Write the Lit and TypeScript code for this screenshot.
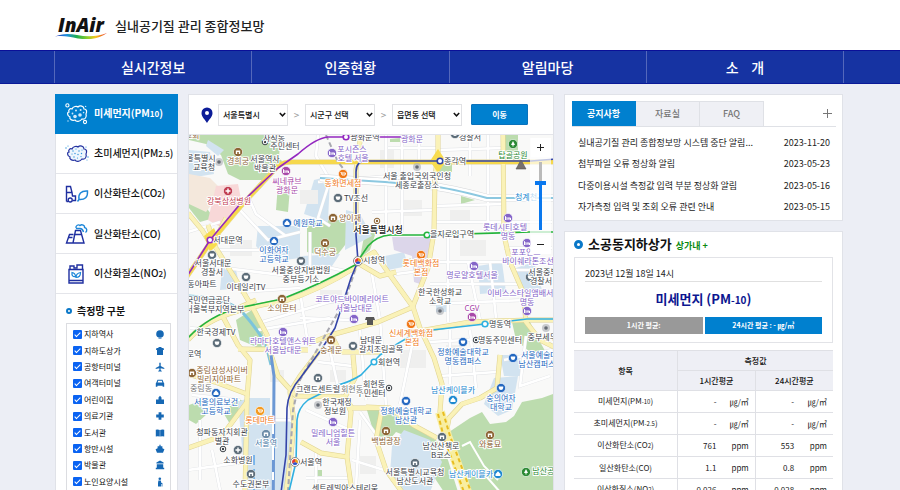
import { LitElement, html, svg, css } from "lit";
import { customElement, state } from "lit/decorators.js";

const FONT = css`"Noto Sans CJK KR", "Noto Sans", sans-serif`;

/* ---------- header ---------- */

@customElement("site-header")
class SiteHeader extends LitElement {
  static styles = css`
    :host { display: block; font-family: ${FONT}; }
    .brand { height: 50px; padding: 2px 0 0 55px; background: #fff; display: flex; align-items: center; box-sizing: border-box; }
    .home { display: flex; align-items: center; gap: 8px; color: #222; text-decoration: none; }
    .mark { display: grid; width: 52px; }
    .word { font: italic 800 19px/22px "Open Sans", sans-serif; padding-left: 3px; color: #111; }
    .swoosh { width: 52px; height: 6px; display: block; margin-top: -3px; }
    .name { font-size: 13px; line-height: 20px; font-weight: 500; }
    .nav { background: #1633a2; border-top: 1px solid #0a0f98; border-bottom: 1px solid #0a1a98; padding: 0 56px 0 54px; }
    .menu { list-style: none; margin: 0; padding: 0; display: grid; grid-template-columns: repeat(4, 1fr); border-right: 1px solid #5468bb; }
    .entry { border-left: 1px solid #5468bb; }
    .link { display: block; text-align: center; font-size: 14px; line-height: 32px; font-weight: 500; color: #fff; text-decoration: none; white-space: pre; }
  `;
  render() {
    const items = ["실시간정보", "인증현황", "알림마당", "소\u00a0\u00a0\u00a0\u00a0개"];
    return html`
      <header class="brand">
        <a class="home" href="#">
          <span class="mark">
            <span class="word">InAir</span>
            <svg class="swoosh" viewBox="0 0 52 6" aria-hidden="true">
              <defs><linearGradient id="r" x1="0" x2="1">
                <stop offset="0" stop-color="#2a2fb0" /><stop offset=".22" stop-color="#1d8fe0" />
                <stop offset=".42" stop-color="#1fae4e" /><stop offset=".62" stop-color="#8ccf2b" />
                <stop offset=".78" stop-color="#f5c51c" /><stop offset="1" stop-color="#e8342a" />
              </linearGradient></defs>
              <path d="M0 3.6C7 .2 14 .4 22 2 32 4 42 3.8 52 0 44 5.8 34 7.4 23 5.4 14 3.6 7 2.4 0 3.6Z" fill="url(#r)" />
            </svg>
          </span>
          <span class="name">실내공기질 관리 종합정보망</span>
        </a>
      </header>
      <nav class="nav">
        <ul class="menu">${items.map((t) => html`<li class="entry"><a class="link" href="#">${t}</a></li>`)}</ul>
      </nav>`;
  }
}

/* ---------- left column ---------- */

const blob = "M7 6C8 3 12 3 13 4 15 2 19 3 19 6 22 6 22 9 21 11 22 14 20 17 17 16 15 19 11 19 10 17 7 18 4 16 5 14 2 13 2 9 4 9 3 7 5 5 7 6Z";
const substanceIcons = [
  svg`<path d=${blob} fill="none" stroke="#fff" stroke-width="1.2"/>
    <g fill="none" stroke="#fff" stroke-width="1.1"><circle cx="2.4" cy="2.4" r="1.6"/><circle cx="20" cy="19" r="1.6"/></g>
    <g fill="#cfe8fb"><circle cx="10" cy="13.5" r="1.8"/><circle cx="15" cy="12" r="1.8"/><circle cx="11" cy="7.5" r="1"/><circle cx="15.6" cy="7" r="1"/><circle cx="7.5" cy="10.5" r=".9"/><circle cx="18.6" cy="9.6" r=".8"/><circle cx="20.6" cy="3.4" r=".7"/><circle cx="3" cy="18" r=".7"/></g>`,
  svg`<path d=${blob} fill="#eef6fd" stroke="#2432a0" stroke-width="1.2"/>
    <g fill="#2a93dc"><circle cx="8" cy="8" r=".7"/><circle cx="11" cy="6" r=".6"/><circle cx="14" cy="8" r=".7"/><circle cx="17" cy="7" r=".6"/><circle cx="7" cy="11" r=".6"/><circle cx="10" cy="10.5" r=".7"/><circle cx="13" cy="11.5" r=".7"/><circle cx="16.5" cy="10.5" r=".7"/><circle cx="9" cy="14" r=".7"/><circle cx="12.5" cy="15" r=".6"/><circle cx="16" cy="13.6" r=".6"/><circle cx="1" cy="5" r=".7"/><circle cx="3" cy="3" r=".6"/><circle cx="23" cy="14" r=".7"/><circle cx="21" cy="4" r=".6"/><circle cx="22" cy="17" r=".5"/></g>`,
  svg`<g fill="none" stroke="#1f2fa0" stroke-width="1.4"><path d="M1.500 18.500V3.500H5.500L7 9.500H1.500M7 9.500 7.500 13H10.500V17.500H7.500M1.500 18.500H3"/><circle cx="5.200" cy="17" r="2"/></g>
    <path d="M14 16.500C13 11 16 7.500 22.500 8 23 14 20 17 14 16.500ZM12.500 18.500 14 16.500" fill="none" stroke="#1c86d8" stroke-width="1.4"/>`,
  svg`<g fill="none" stroke="#1f2fa0" stroke-width="1.400"><path d="M8 20 10.500 7.500H15.500L19 20ZM8.500 11.500H4.500L1.500 20H8"/><path d="M10 11.500H16.500M3.800 14.500H7.500"/></g>
    <path d="M11 5C10.500 2.500 13.500 1 15 2.500 17 .8 20 2.500 19.600 4.500 22 5 22.500 8 20.500 9.500M11 5.500H15C17 5.500 18 7 18.500 9" fill="none" stroke="#1c86d8" stroke-width="1.400"/>`,
  svg`<g fill="none" stroke="#1f2fa0" stroke-width="1.400"><path d="M4 20V6.500H18V20ZM4 17.500H18"/><path d="M5 6V3H9V5H12V2H17.500V6"/></g>
    <g fill="none" stroke="#1c86d8" stroke-width="1.200"><path d="M7 9.500C6.500 12.500 8 14 10.500 13.500 10.500 11 9.500 10 7 9.500ZM15.500 9.500C12.500 10 11 11.500 11 14.500 14 14.500 15.500 12.500 15.500 9.500Z"/></g>`,
];

const siteIcons = [
  svg`<circle cx="5" cy="5" r="3.800"/><path d="M3.500 9H6.500V9.600H3.500Z"/>`,
  svg`<path d="M1.500 2H8.500L9 4H8V9H2V4H1ZM3.500 1H6.500V2H3.500Z"/>`,
  svg`<path d="M4.300 1Q5 0 5.700 1V4L9.300 6V7L5.700 6.200 5.600 8 6.800 9V9.500H3.200V9L4.400 8 4.300 6.200.700 7V6L4.300 4Z"/>`,
  svg`<path d="M2.500 1.800H7.500L8.600 4.600 9.200 5.200V8.800H7.600V7.800H2.400V8.800H.8V5.200L1.400 4.600ZM3.200 2.800 2.600 4.500H7.400L6.800 2.800Z" fill-rule="evenodd"/>`,
  svg`<path d="M1 4.500H3.500V2.500L5 .800 6.500 2.500V4.500H9V9H1Z"/>`,
  svg`<path d="M3.600 1.200H6.400V3.600H8.800V6.400H6.400V8.800H3.600V6.400H1.200V3.600H3.600Z"/>`,
  svg`<path d="M.8 1.800Q3 1.200 4.800 2V8.600Q3 7.800.8 8.400ZM5.200 2Q7 1.200 9.200 1.800V8.400Q7 7.800 5.200 8.600Z"/>`,
  svg`<path d="M4.400.8H5.600V2.200H7.400V4.200L9.400 5.200 8 8.800H2L.6 5.200 2.600 4.200V2.200H4.400Z"/>`,
  svg`<path d="M5 .600 8.600 2.600V3.600H1.400V2.600ZM1.800 4.200H8.200V7.800H9.200V9.200H.8V7.800H1.800Z"/>`,
  svg`<circle cx="4.800" cy="1.700" r="1.300"/><path d="M3.400 3.400H5.800L6.400 6H7.400V9.400H6.600V7H6V9.400H3V6Z"/>`,
];

@customElement("substance-panel")
class SubstancePanel extends LitElement {
  static styles = css`
    :host { display: block; font-family: ${FONT}; background: #fff; border: 1px solid #e0e2e8; box-sizing: border-box; color: #111; }
    .list { list-style: none; margin: 0; padding: 0; }
    .row { border-bottom: 1px solid #e4e5ea; }
    .pick { display: flex; align-items: center; width: 100%; height: 39px; padding: 0 0 0 9px; gap: 5px; border: 0; background: none; font: 500 10px/16px ${FONT}; color: #111; text-align: left; white-space: nowrap; }
    .row.on { border-color: #0080cf; margin: -1px -1px 0; padding: 0 1px; background: #0080cf; }
    .row.on .pick { color: #fff; font-weight: 700; }
    .ico { width: 24px; height: 22px; flex: none; }
    .sub { font-size: 8px; }
    .head { display: flex; align-items: center; gap: 5px; margin: 0; padding: 8px 0 3px 10px; font-size: 10px; line-height: 18px; font-weight: 700; }
    .ring { width: 6px; height: 6px; border: 2px solid #0a78c8; border-radius: 50%; box-sizing: border-box; }
    .box { border: 1px solid #dcdde1; margin: 0 6px 0 10px; height: 190px; padding: 2px 5px 0 6px; }
    .sites { list-style: none; margin: 0; padding: 0; height: 164px; display: grid; grid-template-rows: repeat(10, 1fr); }
    .site { display: flex; align-items: center; }
    .label { flex: 1; display: flex; align-items: center; gap: 2px; font-size: 8px; line-height: 12px; }
    .tick { appearance: none; width: 9px; height: 9px; margin: 0; border-radius: 1px; background: #0a63f2; display: grid; flex: none; }
    .tick:checked::after { content: ""; width: 2px; height: 5px; border: solid #fff; border-width: 0 1px 1px 0; transform: rotate(45deg); place-self: center; margin-bottom: 1px; }
    .mini { width: 10px; height: 10px; fill: #1668b4; }
  `;
  render() {
    const names = [
      html`미세먼지(PM<span class="sub">10</span>)`,
      html`초미세먼지(PM<span class="sub">2.5</span>)`,
      html`이산화탄소(CO<span class="sub">2</span>)`,
      html`일산화탄소(CO)`,
      html`이산화질소(NO<span class="sub">2</span>)`,
    ];
    const sites = ["지하역사", "지하도상가", "공항터미널", "여객터미널", "어린이집", "의료기관", "도서관", "항만시설", "박물관", "노인요양시설"];
    return html`
      <ul class="list">${names.map((n, i) => html`
        <li class="row ${i === 0 ? "on" : ""}"><button class="pick">
          <svg class="ico" viewBox="0 0 24 22" aria-hidden="true">${substanceIcons[i]}</svg><span>${n}</span>
        </button></li>`)}</ul>
      <h2 class="head"><span class="ring"></span>측정망 구분</h2>
      <div class="box"><ul class="sites">${sites.map((s, i) => html`
        <li class="site"><label class="label"><input class="tick" type="checkbox" checked />${s}</label>
          <svg class="mini" viewBox="0 0 10 10" aria-hidden="true">${siteIcons[i]}</svg></li>`)}</ul></div>`;
  }
}

/* ---------- map ---------- */

type Kind = "dot" | "bed" | "cart" | "cup" | "home" | "cross" | "tree" | "ring" | "gov";
const P = "#8464c8", O = "#f07818", B = "#2468c0", N = "#8c6434", G = "#3c4248", M = "#a848a8", R = "#c03c50", T = "#2c8a34", S = "#1c88d0", D = "#222";

const labels: [number, number, string, string][] = [
  [192, 138, "교회", N], [274, 141, "사직동", G], [285, 149, "주민센터", G], [238, 164, "경희궁", N],
  [201, 161, "울특별시", G], [204, 170, "교육청", G], [265, 162, "서울역사", G], [265, 171, "박물관", G],
  [365, 140, "광화문역", G], [412, 142, "광화문", P], [352, 152, "포시즌스", P], [353, 161, "호텔 서울", P],
  [343, 186, "동화면세점", O], [287, 184, "씨네큐브", M], [287, 193, "광화문", M], [229, 204, "강북삼성병원", R],
  [356, 201, "TV조선", G], [308, 226, "예원학교", B], [350, 221, "양이재", N], [470, 140, "경찰서", G],
  [513, 158, "탑골공원", T], [455, 164, "종각역", G], [417, 179, "서울 출입국외국인청", G], [417, 188, "세종로출장소", G],
  [526, 200, "청계천", S], [505, 230, "롯데시티호텔", P], [508, 239, "명동", P],
  [228, 243, "서대문역", G], [274, 253, "이화여자", B], [274, 262, "고등학교", B], [325, 255, "덕수궁", N],
  [213, 266, "서울서대문", G], [212, 275, "경찰서", G], [202, 287, "동아파트", G], [246, 290, "이데일리TV", G],
  [301, 273, "서울중앙지방법원", G], [301, 282, "중부등기소", G], [374, 263, "시청역", G], [208, 303, "국민연금공단", G],
  [215, 312, "서울북부지역본부", G], [282, 311, "소의문터", N], [352, 302, "코트야드바이메리어트", P], [354, 311, "서울남대문", P],
  [216, 335, "한국경제TV", G], [283, 344, "라마다호텔앤스위트", P], [283, 353, "서울남대문", P], [331, 353, "숭례문", N],
  [371, 343, "남대문", G], [381, 352, "갈치조림골목", G], [194, 357, "로역", G],
  [452, 237, "을지로입구역", G], [421, 266, "롯데백화점", O], [421, 275, "본점", O], [472, 278, "명로얄호텔서울", P],
  [526, 255, "포포인츠", P], [528, 264, "바이쉐라톤조선", P], [543, 275, "서울중부", G], [541, 284, "경찰서", G],
  [440, 295, "한국한성화교", G], [440, 304, "소학교", G], [472, 311, "CGV", M], [524, 296, "이비스스타일앰배서더", P], [527, 305, "명동", P],
  [500, 327, "명동역", G], [546, 340, "중부세무서", G], [411, 336, "신세계백화점", O], [412, 345, "본점", O],
  [500, 343, "명동주민센터", G], [463, 355, "정화예술대학교", B], [463, 364, "명동캠퍼스", B], [543, 358, "서울예술대학", B], [537, 367, "남산캠퍼스", B],
  [222, 373, "중림삼성사이버", N], [219, 382, "빌리지아파트", N], [216, 405, "서울의료보건", B], [216, 414, "고등학교", B],
  [260, 423, "롯데마트", O], [222, 435, "청파동자치회관", G], [222, 444, "별관", G], [266, 446, "서울역", "#4c7ca8"],
  [238, 463, "소화병원", G], [251, 487, "수도권본부", G], [318, 392, "그랜드센트럴", G],
  [389, 365, "회현역", G], [374, 387, "회현동", G], [371, 396, "주민센터", G], [337, 405, "한국재정", G], [335, 414, "정보원", G],
  [333, 436, "밀레니엄힐튼", P], [333, 445, "서울", P], [311, 465, "서울역", G], [345, 491, "센트레빌아스테리움", G],
  [453, 393, "남산케이블카", S], [501, 401, "숭의여자", B], [501, 410, "대학교", B], [406, 414, "정화예술대학교", B], [406, 423, "남산관", B],
  [386, 444, "백범광장", N], [441, 449, "남산산책로", G], [441, 458, "B코스", G], [490, 447, "와룡묘", N],
  [415, 475, "서울특별시교육청", G], [415, 484, "남산도서관", G], [471, 477, "남산케이블카", S], [547, 474, "남산공원", T],
];

const pois: [number, number, Kind, string][] = [
  [265, 142, "ring", G], [238, 152, "gov", N], [219, 162, "dot", G], [286, 171, "bed", M], [332, 153, "bed", P], [343, 174, "cart", O],
  [228, 191, "cross", R], [338, 198, "cup", "#5c6c78"], [287, 223, "home", B], [333, 218, "gov", N], [377, 221, "ring", N],
  [455, 134, "cup", "#5c6c78"], [417, 167, "dot", G], [513, 144, "tree", T], [508, 218, "bed", P],
  [274, 241, "home", B], [325, 243, "gov", N], [212, 255, "cup", "#5c6c78"], [246, 277, "cup", "#5c6c78"], [301, 261, "cup", "#5c6c78"],
  [282, 299, "gov", N], [354, 319, "bed", P], [217, 343, "cup", "#5c6c78"], [283, 332, "bed", P], [331, 340, "gov", N], [353, 346, "cup", "#5c6c78"],
  [421, 255, "cart", O], [474, 266, "bed", P], [527, 243, "bed", P], [530, 277, "cup", "#5c6c78"], [440, 311, "dot", G], [472, 317, "bed", M],
  [527, 311, "bed", P], [546, 328, "dot", G], [411, 324, "cart", O], [476, 340, "ring", G], [463, 342, "cup", B], [513, 358, "cup", B],
  [192, 373, "gov", N], [216, 393, "home", B], [260, 411, "cart", "#f49a20"], [266, 434, "gov", "#6c8ca8"], [223, 449, "ring", G],
  [238, 450, "cross", "#5c6c78"], [251, 474, "gov", "#5c6c78"], [318, 378, "gov", "#5c6c78"], [318, 405, "dot", G], [333, 422, "bed", P],
  [389, 388, "ring", G], [406, 401, "cup", B], [453, 400, "home", S], [501, 388, "cup", B], [386, 431, "gov", N], [442, 437, "gov", "#5c6c78"],
  [490, 435, "gov", N], [415, 463, "gov", "#5c6c78"], [498, 474, "home", S], [526, 472, "tree", T],
];

const glyph = (k: Kind) => {
  switch (k) {
    case "bed": return svg`<path d="M-2.500-1.800V2M-2.500 1H2.500V2M-.500 0H2.500V1M-1.500-.500H-.8" stroke="#fff" fill="none"/>`;
    case "cart": return svg`<path d="M-2.500-1.500H-1.500L-1 1H2L2.500-1H-1" stroke="#fff" fill="none"/>`;
    case "cup": return svg`<path d="M-2.200-1.500H2.200V0Q2 2 0 2T-2.200 0Z" fill="#fff"/>`;
    case "home": return svg`<path d="M0-2.800 2.500 0V2H-2.500V0Z" fill="#fff"/>`;
    case "cross": return svg`<path d="M0-2.500V2.500M-2.500 0H2.500" stroke="#fff" stroke-width="1.400"/>`;
    case "tree": return svg`<path d="M0-3 2 1H.5V2.500H-.5V1H-2Z" fill="#fff"/>`;
    default: return svg`<path d="M-2.200 2V-1.500H2.200V2H.8V0H-.8V2Z" fill="#fff"/>`;
  }
};
const marker = ([x, y, k, c]: [number, number, Kind, string]) => svg`<g transform="translate(${x} ${y})">${
  k === "dot" ? svg`<circle r="4" fill="#a8acb2" opacity=".6"/><circle r="1.800" fill="#666c74"/>`
  : k === "ring" ? svg`<circle r="2.800" fill="#fff" stroke=${c}/><circle r="1.200" fill=${c}/>`
  : svg`<circle r="4.600" fill=${c} stroke="#fff" stroke-width=".6"/>${glyph(k)}`}</g>`;

const majorRoads = [
  "M186 278 210 243 241 206 278 166Q283 162 292 162H556", "M438 130V152L435 177 434 232 428 268 413 306",
  "M503 130 504 235 510 262 523 292 526 322 540 340 556 348", "M188 340Q205 320 238 311T282 302Q320 290 356 267",
  "M208 225 216 248 241 288 255 312 267 335 272 360", "M358 262 374 252 390 275 413 307 420 328 434 358 442 384 440 412 447 436",
  "M308 344 331 335 378 322 413 307", "M222 315 238 345 250 360 247 398 245 492", "M420 331 470 322 527 320 556 320",
  "M500 355 497 388 480 398 462 404 449 418 446 434", "M366 407 390 408 413 425 437 438", "M188 374 215 382 247 394M247 402 222 436 188 448",
  "M320 350 300 376 290 392 294 422 291 455 286 492", "M271 355 278 376 296 396 345 397 355 378 353 355", "M345 397 351 412 347 457 321 453 301 442M347 457 352 492", "M345 398 352 408 380 408",
  "M361 134 356 170V230", "M188 213 202 230 210 243M216 238 226 218", "M224 314 256 300", "M238 349 308 350",
  "M382 408 376 440 386 470 402 492", "M356 262 380 276 396 272", "M332 336 340 352 380 352",
];
const minorRoads = [
  "M318 134 316 156 330 180 318 218 330 226M318 182 390 176 432 186", "M386 134V228M402 134V232M419 134V160M470 134V176M488 134V234",
  "M438 150 503 148M388 148H438M372 212 434 210M434 206 504 204M434 222H552", "M248 196 256 214 286 236M240 210 268 240 300 232",
  "M188 232 220 222M216 250 268 250M225 268 290 276M310 232V270M322 266 350 272", "M190 328 230 332M240 292 300 288M262 322 350 296M300 292 308 344",
  "M300 318 350 320M258 330 330 318M372 274 380 320M396 274 428 270M428 262 504 262M504 248H552M512 270H552",
  "M448 236V322M468 262 480 320M490 262 496 318M430 284 520 284M430 304 526 300", "M430 342 500 338M450 330V384M470 330 476 388M440 376 496 372M380 318 386 406M360 330 366 400",
  "M192 395 240 400M200 420V480M188 470 244 462M212 450 220 490M248 420 290 420", "M306 410 350 430M316 452V490M306 478H348M360 412 380 440M318 362 352 366M330 350 340 396",
  "M526 336 520 386 550 376M504 360 552 350M414 336 400 404", "M352 460 384 470M360 420 356 486",
];
const lots = ["M380 150h14v18h-14z", "M450 210h20v14h-20z", "M460 240h26v16h-26z", "M400 200h22v16h-22z", "M320 290h22v14h-22z", "M270 370h14v12h-14z", "M330 370h16v12h-16z", "M400 350h26v18h-26z", "M230 240h22v16h-22z", "M300 190h18v14h-18z", "M446 345h18v14h-18z", "M360 456h16v18h-16z"];

@customElement("air-map")
class AirMap extends LitElement {
  static styles = css`
    :host { display: block; position: relative; font-family: ${FONT}; }
    .map { display: block; width: 100%; height: auto; background: #f8f8f8; }
    .lbl { font: 400 8px ${FONT}; text-anchor: middle; paint-order: stroke; stroke: #fff; stroke-width: 2px; stroke-linejoin: round; }
    .lbl.big { font-size: 9px; font-weight: 500; }
    .zoom { position: absolute; top: 3px; right: 2px; width: 21px; display: flex; flex-direction: column; align-items: center; gap: 5px; background: rgba(255, 255, 255, .7); }
    .btn { width: 20px; height: 19px; padding: 0; border: 0; background: #fff; display: grid; place-items: center; }
    .sign { width: 9px; height: 9px; stroke: #222; }
    .range { appearance: none; writing-mode: vertical-lr; direction: rtl; width: 12px; height: 68px; margin: 0; background: none; }
    .range::-webkit-slider-runnable-track { width: 3px; height: 68px; background: linear-gradient(#bbb 30%, #0a78ee 30%); }
    .range::-webkit-slider-thumb { appearance: none; width: 11px; height: 4px; margin-left: -4px; background: #0a78ee; }
  `;
  render() {
    return html`
      <svg class="map" viewBox="189 135 364 400" role="img" aria-label="서울특별시청 주변 지도">
        <rect x="180" y="130" width="380" height="410" fill="#f9f9f8" />
        <g fill="#bcdcae">
          <path d="M189 130H281L279 158 285 164 263 180H240L228 174 221 155 206 144 189 140Z" />
          <path d="M307 220H345L352 236 335 258 307 252Z" /><path d="M366 226 376 232 370 250 360 258Z" />
          <path d="M505 134H518V160H505Z" /><path d="M442 163H452V172H438Z" /><path d="M461 196 475 200 461 204Z" />
          <path d="M236 320 252 310 262 330 268 352 240 340Z" /><path d="M189 405 203 400 207 414 196 424 189 420Z" />
          <path d="M512 322H530L540 342 548 356 530 352 516 340Z" />
          <path d="M449 432 470 418 482 412 490 424 506 422 514 416 522 402 542 398 556 393V540H472L455 462Z" />
          <path d="M366 407 390 410 412 426 437 441 448 460 458 492 444 492 432 474 416 440 396 432 384 446 376 440Z" />
          <path d="M278 184 290 188 288 212 276 210Z" /><path d="M189 192 202 202 214 218 200 222 189 208Z" /><path d="M236 398 246 402 230 424 224 414Z" />
          <path d="M410 258 414 262 402 266Z" /><path d="M316 470H322V476H316Z" /><path d="M390 139 400 138V142H390Z" />
        </g>
        <g fill="#d2e3f0">
          <path d="M189 150 210 152 214 174 189 178Z" /><path d="M314 180 330 176 328 222 304 214Z" /><path d="M346 210 360 214 372 236 345 250Z" />
          <path d="M258 226H300V258L270 262 256 246Z" /><path d="M222 268 236 270 240 288 220 290Z" /><path d="M302 256 340 254 328 272 304 268Z" />
          <path d="M385 256 404 252 408 266 388 270Z" /><path d="M478 266 502 262 506 292 480 294Z" /><path d="M516 268 534 262 542 290 520 292Z" />
          <path d="M238 402 248 398H270V422H292L286 492H246Z" /><path d="M392 446 404 430 430 440 442 462 430 492H402L390 474Z" />
          <path d="M494 378 518 376 512 410 498 416 484 404Z" /><path d="M436 302H450V312H436Z" /><path d="M208 140 224 150 218 156 206 146Z" /><path d="M500 355H520V376H504Z" />
        </g>
        <path d="M392 237H432L428 264 420 284 414 282 412 256 394 250Z" fill="#dcd6ea" />
        <path d="M189 174 210 178 222 190 206 212 189 204Z" fill="#f4e8dc" /><path d="M216 186 238 184 242 204 222 228 208 220Z" fill="#f8d8d8" />
        <g fill="#efefee">${lots.map((d) => svg`<path d=${d} />`)}</g>
        <g fill="none" stroke="#e0e2e5" stroke-width="3.400">${minorRoads.map((d) => svg`<path d=${d} />`)}</g>
        <g fill="none" stroke="#fff" stroke-width="2.600">${minorRoads.map((d) => svg`<path d=${d} />`)}</g>
        <path d="M189 296Q230 298 244 314T266 345L271 365" fill="none" stroke="#7cc4dc" stroke-width="3" />
        <path d="M320 178 385 182 430 186Q450 188 487 198H556" fill="none" stroke="#d4d6d8" stroke-width="8" />
        <path d="M320 178 385 182 430 186Q450 188 487 198H556" fill="none" stroke="#fff" stroke-width="7" />
        <path d="M320 178 385 182 430 186Q450 188 487 198H556" fill="none" stroke="#8cc8e0" stroke-width="2" />
        <g fill="none" stroke="#dfd290" stroke-width="5" stroke-linejoin="round">${majorRoads.map((d) => svg`<path d=${d} />`)}</g>
        <g fill="none" stroke="#faf2b8" stroke-width="4" stroke-linejoin="round">${majorRoads.map((d) => svg`<path d=${d} />`)}</g>
        <path d=${majorRoads[0]} fill="none" stroke="#f6d84c" stroke-width="4" />
        <path d="M438 149 446 161 438 173 430 161ZM204 236 214 228 220 242 210 252Z" fill="#f8dc50" />
        <path d="M440 412 447 436 467 492" fill="none" stroke="#f8eea0" stroke-width="10" />
        <path d="M438 414 444 438 464 492M443 412 450 436 471 492" fill="none" stroke="#e8bc20" stroke-width="2" stroke-dasharray="4 3" />
        <path d="M498 480 484 466 470 442 462 446M500 492 486 476" fill="none" stroke="#fff" stroke-width="2" />
        <path d="M326 135 338 162 346 172M358 262 345 300 318 348 300 380 293 410 288 492" fill="none" stroke="#a8a8b0" stroke-width="2" stroke-dasharray="5 3" />
        <path d="M271 355 274 376 273 540" fill="none" stroke="#6c98d4" stroke-width="3" /><path d="M273 420V480" stroke="#fff" stroke-width="2" stroke-dasharray="14 12" />
        <path d="M254 455V492" stroke="#58a8e8" stroke-width="1.500" stroke-dasharray="10 4" />
        <g fill="none" stroke-width="1.600" stroke-linejoin="round">
          <path d="M186 278 210 240 241 203 278 168 298 154Q316 138 328 137H402" stroke="#9428c0" />
          <path d="M556 159 531 161H366Q356 161 356 172V235L358 261 351 278 335 328 321 350 301 377Q288 392 287 408L286 455 280 500" stroke="#3444a8" />
          <path d="M186 340Q208 316 238 308L282 299Q321 284 355 265L368 246Q377 236 390 235H427L530 232H556" stroke="#24b43c" />
          <path d="M556 319H527L485 324 423 331Q408 336 380 355L361 375Q350 382 338 385L308 400Q298 408 297 420L296 462 287 500" stroke="#30b0e0" />
        </g>
        <g fill="#fff" stroke-width="1.600"><circle cx="346" cy="137" r="2.800" stroke="#9428c0" /><circle cx="210" cy="240" r="2.800" stroke="#9428c0" />
          <circle cx="440" cy="161" r="2.800" stroke="#3444a8" /><circle cx="427" cy="235" r="2.800" stroke="#24b43c" />
          <circle cx="485" cy="324" r="2.800" stroke="#30b0e0" /><circle cx="374" cy="362" r="2.800" stroke="#30b0e0" /></g>
        ${[[358, 261], [295, 462]].map(([x, y]) => svg`<g transform="translate(${x} ${y})"><circle r="4.500" fill="#fff" stroke="#888" /><path d="M0 0V-3A3 3 0 0 1 2.600 1.500Z" fill="#e8a020" /><path d="M0 0 2.600 1.500A3 3 0 0 1-2.600 1.500Z" fill="#2c50c8" /><path d="M0 0-2.600 1.500A3 3 0 0 1 0-3Z" fill="#e03838" /></g>`)}
        <path d="M521 160 526 169H516Z" fill="#77706c" stroke="#555" stroke-width=".6" />
        <path d="M366 317 374 317 375 320H373V325H367V320H365Z" fill="#555" />
        ${pois.map(marker)}
        ${labels.map(([x, y, t, c]) => svg`<text class="lbl" x=${x} y=${y} fill=${c}>${t}</text>`)}
        <text class="lbl" x="201" y="391" fill="#777">중림동</text>
        <text class="lbl" x="352" y="392" fill="#777">회현동</text>
        <text class="lbl big" x="378" y="233" fill=${D}>서울특별시청</text>
      </svg>
      <div class="zoom">
        <button class="btn" aria-label="확대"><svg class="sign" viewBox="0 0 9 9"><path d="M4.500 1V8M1 4.500H8" /></svg></button>
        <input class="range" type="range" min="0" max="100" value="71" aria-label="지도 배율" />
        <button class="btn" aria-label="축소"><svg class="sign" viewBox="0 0 9 9"><path d="M1 4.500H8" /></svg></button>
      </div>`;
  }
}

@customElement("map-panel")
class MapPanel extends LitElement {
  static styles = css`
    :host { display: block; font-family: ${FONT}; background: #fff; border: 1px solid #e0e2e8; box-sizing: border-box; min-width: 0; }
    .bar { display: flex; align-items: center; height: 39px; padding-left: 12px; gap: 5px; border-bottom: 1px solid #e4e5ea; }
    .pin { width: 12px; height: 18px; flex: none; }
    .field { display: grid; width: 70px; height: 22px; align-items: center; }
    .sel { grid-area: 1 / 1; appearance: none; width: 100%; height: 100%; padding: 0 4px; border: 1px solid #e0e1e4; border-radius: 0; background: #fff; color: #111; font: 500 8px/12px ${FONT}; }
    .chev { grid-area: 1 / 1; justify-self: end; margin-right: 2px; width: 7px; height: 7px; fill: none; stroke: #111; stroke-width: 1.5px; pointer-events: none; }
    .gt { width: 7px; font-size: 10px; line-height: 12px; color: #999; text-align: center; }
    .go { width: 57px; height: 21px; margin-left: 4px; padding: 0; border: 1px solid #0a72bc; border-radius: 1px; background: #0080cf; color: #fff; font: 700 8px/12px ${FONT}; }
  `;
  private field(label: string) {
    return html`<span class="field"><select class="sel" aria-label=${label}><option>${label}</option></select>
      <svg class="chev" viewBox="0 0 7 7"><path d="M.8 2 3.500 4.800 6.200 2" /></svg></span>`;
  }
  render() {
    return html`
      <form class="bar">
        <svg class="pin" viewBox="0 0 12 18" aria-hidden="true"><path d="M6 1.500A5.500 5.500 0 0 1 11.500 7C11.500 11 8 13.500 6 17 4 13.500.5 11 .5 7A5.500 5.500 0 0 1 6 1.500ZM6 5A2 2 0 1 0 6 9 2 2 0 0 0 6 5Z" fill="#0c1c98" /></svg>
        ${this.field("서울특별시")}<span class="gt">&gt;</span>${this.field("시군구 선택")}<span class="gt">&gt;</span>${this.field("읍면동 선택")}
        <button class="go" type="button">이동</button>
      </form>
      <air-map></air-map>`;
  }
}

/* ---------- right column ---------- */

@customElement("notice-panel")
class NoticePanel extends LitElement {
  @state() tab = 0;
  static styles = css`
    :host { display: block; font-family: ${FONT}; background: #fff; border: 1px solid #e0e2e8; box-sizing: border-box; padding: 6px 6px 2px 7px; color: #222; }
    .tabs { display: flex; border-bottom: 1px solid #dfe1e6; }
    .tab { width: 64px; height: 25px; padding: 0; border: 1px solid #dfe1e6; border-width: 1px 1px 0 0; background: #eff0f5; color: #777; font: 500 9px/14px ${FONT}; }
    .tab.on { background: #0080cf; border-color: #0080cf; color: #fff; font-weight: 700; }
    .more { margin-left: auto; width: 18px; height: 24px; padding: 0; border: 0; background: none; display: grid; place-items: center; }
    .plus { width: 9px; height: 9px; stroke: #777; }
    .news { list-style: none; margin: 0; padding: 5px 6px 0; display: grid; grid-template-rows: repeat(4, 1fr); height: 86px; }
    .item { display: flex; justify-content: space-between; align-items: center; font-size: 9px; line-height: 14px; white-space: nowrap; }
    .link { color: inherit; text-decoration: none; }
  `;
  render() {
    const news = [
      ["실내공기질 관리 종합정보망 시스템 중단 알림...", "2023-11-20"],
      ["첨부파일 오류 정상화 알림", "2023-05-23"],
      ["다중이용시설 측정값 입력 부분 정상화 알림", "2023-05-16"],
      ["자가측정 입력 및 조회 오류 관련 안내", "2023-05-15"],
    ];
    return html`
      <div class="tabs">${["공지사항", "자료실", "FAQ"].map((t, i) => html`<button class="tab ${i === this.tab ? "on" : ""}" @click=${() => (this.tab = i)}>${t}</button>`)}
        <button class="more" aria-label="더보기"><svg class="plus" viewBox="0 0 9 9"><path d="M4.500 0V9M0 4.500H9" /></svg></button></div>
      <ul class="news">${news.map(([t, d]) => html`<li class="item"><a class="link" href="#">${t}</a><time>${d}</time></li>`)}</ul>`;
  }
}

@customElement("reading-panel")
class ReadingPanel extends LitElement {
  static styles = css`
    :host { display: block; font-family: ${FONT}; background: #fff; border: 1px solid #e0e2e8; box-sizing: border-box; padding: 1px 9px 10px; color: #222; }
    .title { display: flex; align-items: center; gap: 5px; margin: 0; font-size: 13px; line-height: 22px; font-weight: 700; color: #111; }
    .ring { width: 9px; height: 9px; border: 3px solid #0a78c8; border-radius: 50%; box-sizing: border-box; }
    .where { font-size: 9px; line-height: 14px; color: #0a8a10; padding-top: 4px; margin-left: -1px; }
    .card { border: 1px solid #e2e3e7; padding: 8px 10px; margin: 2px 0 7px; }
    .when { font-size: 9px; line-height: 15px; border-bottom: 1px solid #e0e0e0; margin: 0; }
    .what { margin: 0; font-size: 13px; line-height: 34px; font-weight: 700; color: #0c1690; text-align: center; }
    .small { font-size: 10px; }
    .avgs { display: grid; grid-template-columns: 1fr 1fr; gap: 2px; font-size: 7px; line-height: 17px; font-weight: 700; color: #fff; text-align: center; }
    .hour { background: #999; }
    .day { background: #0080cf; }
    .data { width: 100%; border-collapse: collapse; table-layout: fixed; font-size: 8px; line-height: 12px; }
    .c-name { width: 40%; }
    .th { background: #eeeff5; font-weight: 500; padding: 0; height: 19px; border-bottom: 1px solid #dfe0e5; border-left: 1px solid #dfe0e5; color: #111; }
    .th.first, .name { border-left: 0; }
    .top { border-top: 1px solid #dfe0e5; }
    .td { padding: 0; height: 21px; border-bottom: 1px solid #dfe0e5; text-align: right; font-weight: 400; }
    .val { border-left: 1px solid #dfe0e5; }
    .unit { padding-right: 6px; }
    .td.name { text-align: center; }
    .sub { font-size: 6px; }
  `;
  render() {
    const rows = [
      [html`미세먼지(PM<span class="sub">-10</span>)`, "-", "-", "㎍/㎥"],
      [html`초미세먼지(PM<span class="sub">-2.5</span>)`, "-", "-", "㎍/㎥"],
      [html`이산화탄소(CO<span class="sub">2</span>)`, "761", "553", "ppm"],
      [html`일산화탄소(CO)`, "1.1", "0.8", "ppm"],
      [html`이산화질소(NO<span class="sub">2</span>)`, "0.026", "0.028", "ppm"],
    ];
    return html`
      <h2 class="title"><span class="ring"></span>소공동지하상가 <span class="where">상가내 +</span></h2>
      <section class="card">
        <p class="when">2023년 12월 18일 14시</p>
        <h3 class="what">미세먼지 (PM<span class="small">-10</span>)</h3>
        <div class="avgs"><span class="hour">1시간 평균:</span><span class="day">24시간 평균 : - ㎍/㎥</span></div>
      </section>
      <table class="data">
        <colgroup><col class="c-name" /><col /><col /><col /><col /></colgroup>
        <thead>
          <tr><th class="th first top" rowspan="2">항목</th><th class="th top" colspan="4">측정값</th></tr>
          <tr><th class="th" colspan="2">1시간평균</th><th class="th" colspan="2">24시간평균</th></tr>
        </thead>
        <tbody>${rows.map(([n, a, b, u]) => html`<tr><th class="td name" scope="row">${n}</th>
          <td class="td val">${a}</td><td class="td unit">${u}</td><td class="td val">${b}</td><td class="td unit">${u}</td></tr>`)}</tbody>
      </table>`;
  }
}

/* ---------- page ---------- */

@customElement("app-root")
class AppRoot extends LitElement {
  static styles = css`
    :host { display: block; height: 100vh; overflow-y: auto; scrollbar-width: none; background: #eceef5; }
    .page { display: grid; grid-template-columns: 123px minmax(0, 1fr) 279px; gap: 10px; align-items: start; padding: 10px 57px 10px 55px; }
    .side { display: grid; gap: 10px; }
  `;
  render() {
    return html`
      <site-header></site-header>
      <main class="page">
        <substance-panel></substance-panel>
        <map-panel></map-panel>
        <div class="side"><notice-panel></notice-panel><reading-panel></reading-panel></div>
      </main>`;
  }
}
